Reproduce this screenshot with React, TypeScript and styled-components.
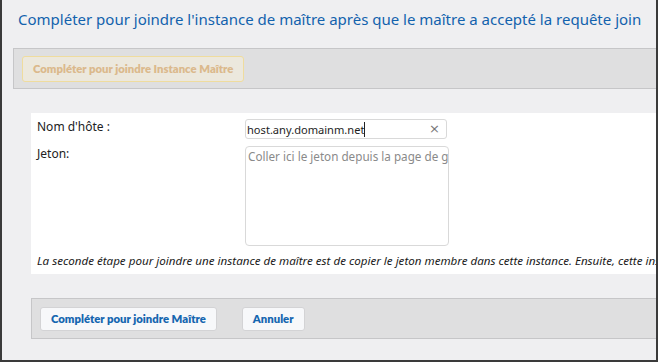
import React from "react";
import styled, { createGlobalStyle } from "styled-components";

const Global = createGlobalStyle`
  html, body { margin: 0; padding: 0; background: #efeff1; }
  body { font-family: "Noto Sans", "Open Sans", sans-serif; }
  * { box-sizing: border-box; }
`;

const Frame = styled.div`
  width: 658px;
  height: 362px;
  background: #efeff1;
  border-left: 2px solid #3a3a3a;
  border-right: 2px solid #3a3a3a;
  border-bottom: 2px solid #3a3a3a;
  padding-left: 11px;
  overflow: hidden;
  display: flex;
  flex-direction: column;
`;

const Title = styled.h1`
  margin: 0;
  padding: 8px 0 0 5px;
  height: 48px;
  font-family: "Noto Sans", sans-serif;
  font-weight: 400;
  font-size: 15px;
  line-height: 22px;
  color: #1262ad;
  white-space: nowrap;
`;

const Toolbar = styled.div<{ $inset?: number }>`
  margin-left: ${(p) => p.$inset ?? 0}px;
  height: 41px;
  background: #dfdfe0;
  border-top: 1px solid #c6c6c8;
  border-bottom: 1px solid #c6c6c8;
  border-left: 1px solid #c6c6c8;
  display: flex;
  align-items: center;
  gap: 25px;
  padding-left: 8px;
  flex-shrink: 0;
`;

const Button = styled.button<{ $disabled?: boolean }>`
  height: ${(p) => (p.$disabled ? 26 : 24)}px;
  padding: 0 10px;
  border-radius: 3px;
  font-family: "Lato", "Noto Sans", sans-serif;
  font-weight: 800;
  font-size: 11.3px;
  white-space: nowrap;
  cursor: ${(p) => (p.$disabled ? "default" : "pointer")};
  background: ${(p) => (p.$disabled ? "#ece8dd" : "#f7f8fa")};
  border: 1px solid ${(p) => (p.$disabled ? "#efdc9e" : "#d3d3d5")};
  color: ${(p) => (p.$disabled ? "#dbb98c" : "#1566b0")};
`;

const Section = styled.div`
  padding: 24px 0 0 18px;
  flex-shrink: 0;
`;

const Panel = styled.div`
  background: #ffffff;
  height: 161px;
  padding: 6px 0 0 6px;
  display: grid;
  grid-template-columns: 208px 1fr;
  grid-template-rows: 20px 100px auto;
  row-gap: 7px;
  overflow: hidden;
`;

const Label = styled.label`
  font-family: "Noto Sans", sans-serif;
  font-size: 12px;
  line-height: 16px;
  color: #222;
`;

const InputWrap = styled.div`
  position: relative;
  width: 202px;
  height: 20px;
  border: 1px solid #d9d9d9;
  border-radius: 3px;
  display: flex;
  align-items: center;
  padding-left: 1px;
`;

const TextValue = styled.span`
  font-family: "Noto Sans", sans-serif;
  font-size: 11.1px;
  color: #1e1e1e;
  border-right: 1px solid #222;
  line-height: 15px;
`;

const Clear = styled.span`
  position: absolute;
  right: 6px;
  top: 1px;
  font-size: 13px;
  color: #777;
  font-family: "DejaVu Sans", sans-serif;
  line-height: 16px;
`;

const TextArea = styled.textarea`
  width: 204px;
  height: 100px;
  border: 1px solid #d9d9d9;
  border-radius: 4px;
  resize: none;
  overflow: hidden;
  padding: 1px 2px;
  font-family: "Noto Sans", sans-serif;
  font-size: 11.7px;
  line-height: 17px;
  outline: none;
  &::placeholder { color: #8a8a8a; }
`;

const Note = styled.p`
  grid-column: 1 / span 2;
  margin: 0;
  font-family: "Noto Sans", sans-serif;
  font-style: italic;
  font-size: 11.6px;
  line-height: 16px;
  color: #1a1a1a;
  white-space: nowrap;
`;

const Spacer = styled.div`
  height: 24px;
  flex-shrink: 0;
`;

export default function App() {
  return (
    <>
      <Global />
      <Frame>
        <Title>Compléter pour joindre l'instance de maître après que le maître a accepté la requête join</Title>
        <Toolbar>
          <Button $disabled disabled>Compléter pour joindre Instance Maître</Button>
        </Toolbar>
        <Section>
          <Panel>
            <Label>Nom d'hôte :</Label>
            <InputWrap>
              <TextValue>host.any.domainm.net</TextValue>
              <Clear>×</Clear>
            </InputWrap>
            <Label>Jeton:</Label>
            <TextArea wrap="off" placeholder="Coller ici le jeton depuis la page de gestion du cluster" />
            <Note>
              La seconde étape pour joindre une instance de maître est de copier le jeton membre dans cette instance. Ensuite, cette instance sera ajoutée au cluster.
            </Note>
          </Panel>
        </Section>
        <Spacer />
        <Toolbar $inset={18}>
          <Button>Compléter pour joindre Maître</Button>
          <Button>Annuler</Button>
        </Toolbar>
      </Frame>
    </>
  );
}
